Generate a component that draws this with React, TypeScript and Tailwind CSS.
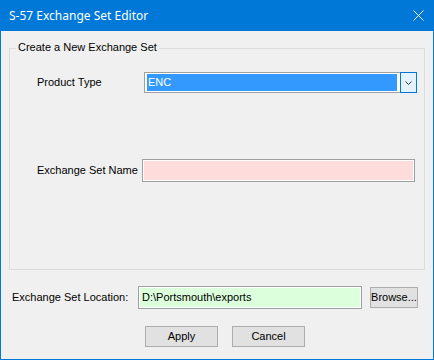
import React from "react";

function Chevron() {
  return (
    <svg width="7" height="4" viewBox="0 0 7 4" className="block">
      <path d="M0.5 0.5 L3.5 3.5 L6.5 0.5" fill="none" stroke="#333" strokeWidth="1" />
    </svg>
  );
}

export default function App() {
  return (
    <div className="w-[434px] h-[360px] bg-[#0078d7] flex flex-col font-['Liberation_Sans',Arial,sans-serif] text-[11px] leading-[13px] text-black">
      {/* Title bar */}
      <div className="h-[31px] shrink-0 flex items-center justify-between pl-[9px] pr-[10px] text-white font-['Noto_Sans',sans-serif] text-[12px] leading-[16px]">
        <span>S-57 Exchange Set Editor</span>
        <svg width="11" height="11" viewBox="0 0 11 11" className="block">
          <path d="M0.5 0.5 L10.5 10.5 M10.5 0.5 L0.5 10.5" stroke="white" strokeWidth="1" />
        </svg>
      </div>

      {/* Body */}
      <div className="flex-1 mx-px mb-px bg-[#f0f0f0] flex flex-col">
        {/* Group box */}
        <div className="relative mt-[17px] ml-[8px] w-[416px] h-[222px] border border-[#dcdcdc] pl-[27px] flex flex-col">
          <span className="absolute top-[-8px] left-[6px] px-[2px] bg-[#f0f0f0]">
            Create a New Exchange Set
          </span>

          <div className="mt-[23px] flex items-center h-[21px]">
            <span className="w-[107px] shrink-0">Product Type</span>
            <div className="flex h-[21px]">
              <div className="w-[256px] h-[21px] border-l border-t border-b border-[#a0a0a0] bg-white pl-[2px] pr-[3px] py-[1px] flex">
                <div className="flex-1 bg-[#3399ff] text-white pl-[1px] flex items-center">
                  ENC
                </div>
              </div>
              <div className="w-[17px] h-[21px] border border-[#0078d7] bg-[#e5f1fb] flex items-center justify-center">
                <Chevron />
              </div>
            </div>
          </div>

          <div className="mt-[66px] flex items-center h-[23px]">
            <span className="w-[105px] shrink-0">Exchange Set Name</span>
            <div className="w-[273px] h-[23px] border border-[#a0a0a0] bg-[#ffdcdc] shadow-[inset_0_0_0_1px_white]" />
          </div>
        </div>

        {/* Location row */}
        <div className="mt-[16px] pl-[11px] flex items-center h-[23px]">
          <span className="w-[126px] shrink-0">Exchange Set Location:</span>
          <div className="w-[224px] h-[23px] border border-[#a0a0a0] bg-[#dcffdc] shadow-[inset_0_0_0_1px_white] pl-[3px] pt-[4px]">
            D:\Portsmouth\exports
          </div>
          <div className="ml-[8px] w-[48px] h-[21px] border border-[#adadad] bg-[#e1e1e1] flex items-center justify-center">
            Browse...
          </div>
        </div>

        {/* Buttons */}
        <div className="mt-[17px] ml-[144px] flex gap-[14px]">
          <div className="w-[73px] h-[21px] border border-[#adadad] bg-[#e1e1e1] flex items-center justify-center">
            Apply
          </div>
          <div className="w-[73px] h-[21px] border border-[#adadad] bg-[#e1e1e1] flex items-center justify-center">
            Cancel
          </div>
        </div>
      </div>
    </div>
  );
}
